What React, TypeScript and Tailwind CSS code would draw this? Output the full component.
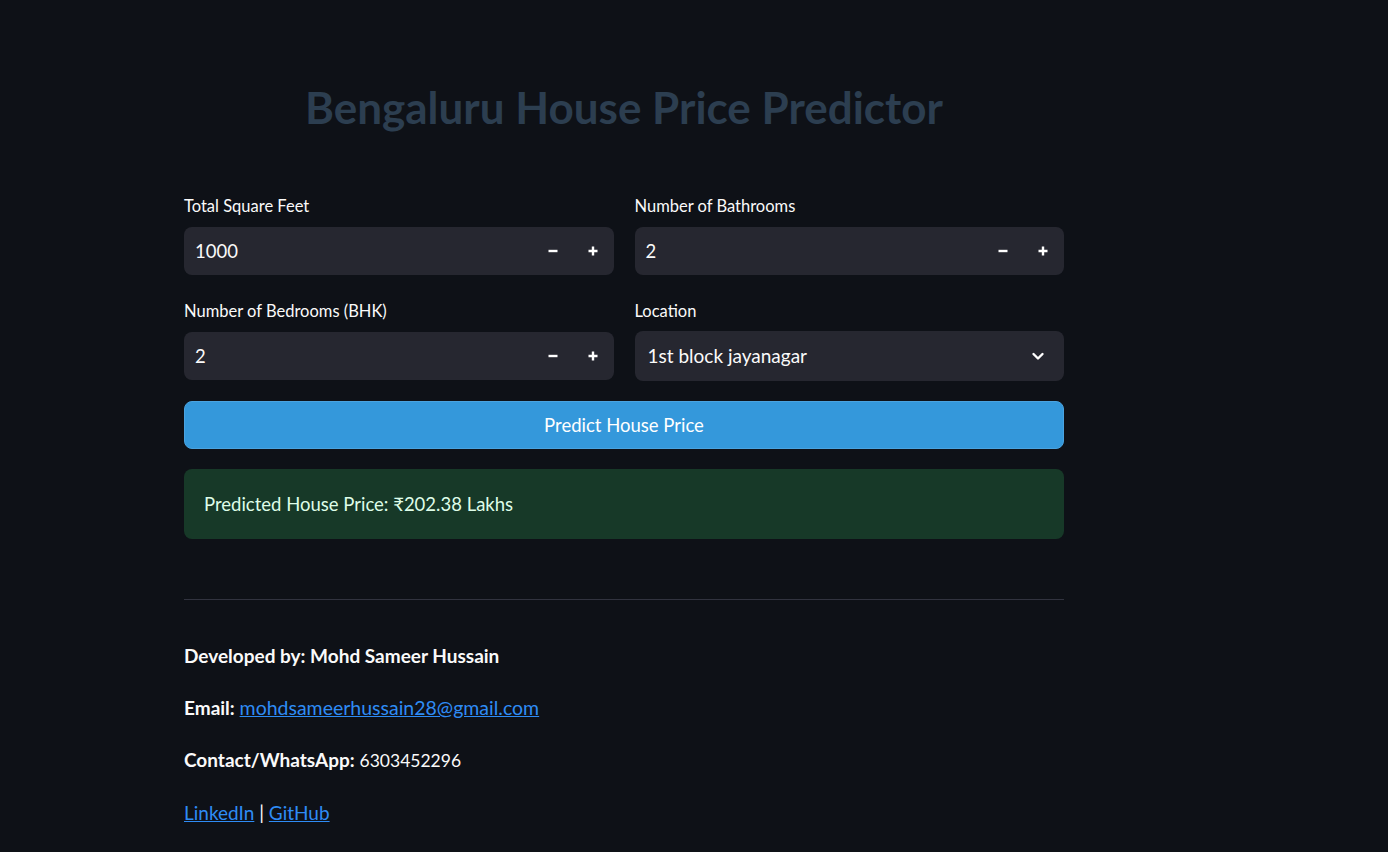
const font = { fontFamily: '"Source Sans Pro", Lato, "Noto Sans", sans-serif' };

function Minus() {
  return (
    <svg width="12" height="12" viewBox="0 0 12 12" className="text-white">
      <path d="M1.5 6h9" stroke="currentColor" strokeWidth="2.4" />
    </svg>
  );
}

function Plus() {
  return (
    <svg width="12" height="12" viewBox="0 0 12 12" className="text-white">
      <path d="M1.5 6h9M6 1.5v9" stroke="currentColor" strokeWidth="2.4" />
    </svg>
  );
}

function NumberField({ label, value }: { label: string; value: string }) {
  return (
    <div className="flex flex-col">
      <label className="text-[16.5px] leading-[20px] text-[#fafafa]">{label}</label>
      <div className="mt-[11px] flex h-[48px] items-center rounded-lg bg-[#262730] pl-[11px] pr-px">
        <span className="flex-1 pt-[2px] text-[18.5px] text-[#fafafa]">{value}</span>
        <button className="flex h-[40px] w-[40px] items-center justify-center">
          <Minus />
        </button>
        <button className="flex h-[40px] w-[40px] items-center justify-center">
          <Plus />
        </button>
      </div>
    </div>
  );
}

function SelectField({ label, value }: { label: string; value: string }) {
  return (
    <div className="flex flex-col">
      <label className="text-[16.5px] leading-[20px] text-[#fafafa]">{label}</label>
      <div className="mt-[10px] flex h-[50px] items-center rounded-lg bg-[#262730] pl-[13px] pr-[18px]">
        <span className="flex-1 pt-px text-[19px] text-[#fafafa]">{value}</span>
        <svg width="16" height="16" viewBox="0 0 16 16" className="text-white">
          <path d="M3.5 6l4.5 4.5L12.5 6" fill="none" stroke="currentColor" strokeWidth="2.4" strokeLinecap="round" strokeLinejoin="round" />
        </svg>
      </div>
    </div>
  );
}

export default function App() {
  return (
    <div className="min-h-screen bg-[#0e1117] pl-[184px] pt-[79px] pb-[30px]" style={font}>
      <div className="w-[880px]">
        <h1 className="text-center text-[44px] font-bold leading-[56px] text-[#2c3e50]">
          Bengaluru House Price Predictor
        </h1>

        <div className="mt-[61px] grid grid-cols-2 gap-x-[21px]">
          <NumberField label="Total Square Feet" value="1000" />
          <NumberField label="Number of Bathrooms" value="2" />
        </div>

        <div className="mt-[26px] grid grid-cols-2 gap-x-[21px]">
          <NumberField label="Number of Bedrooms (BHK)" value="2" />
          <SelectField label="Location" value="1st block jayanagar" />
        </div>

        <button className="mt-[20px] flex h-[48px] w-full items-center justify-center rounded-lg border border-[#4aa3e0] bg-[#3498db] pt-[2px] text-[18.5px] text-white">
          Predict House Price
        </button>

        <div className="mt-[20px] flex h-[70px] items-center rounded-lg bg-[#173928] px-[20px] pt-[2px] text-[18.5px] text-[#dffde9]">
          Predicted House Price: ₹202.38 Lakhs
        </div>

        <hr className="mt-[60px] border-0 border-t border-[#31333f]" />

        <div className="mt-[42px] flex flex-col gap-[24px] text-[19px] leading-[28px] text-[#fafafa]">
          <p className="font-bold">Developed by: Mohd Sameer Hussain</p>
          <p>
            <span className="font-bold">Email:</span>{" "}
            <a href="#" className="text-[19.5px] text-[#2e8cf5] underline">mohdsameerhussain28@gmail.com</a>
          </p>
          <p>
            <span className="font-bold">Contact/WhatsApp:</span>{" "}
            <span className="text-[17.5px]">6303452296</span>
          </p>
          <p>
            <a href="#" className="text-[#2e8cf5] underline">LinkedIn</a> |{" "}
            <a href="#" className="text-[#2e8cf5] underline">GitHub</a>
          </p>
        </div>
      </div>
    </div>
  );
}
